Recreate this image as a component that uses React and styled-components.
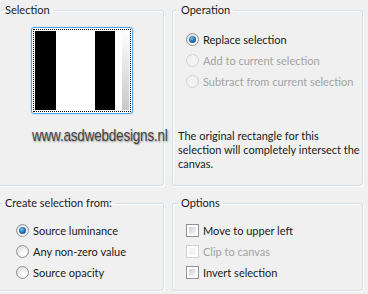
import styled, { createGlobalStyle } from "styled-components"

const GlobalStyle = createGlobalStyle`
    html, body {
        margin: 0;
        padding: 0;
        background: #f0f0f0;
    }
    body {
        font-family: Lato, "Noto Sans", sans-serif;
        font-size: 11px;
        color: #1a1a1a;
        overflow: hidden;
    }
`

export default function App() {
    return (
        <>
            <GlobalStyle />
            <Dialog>
                <Group>
                    <Legend>Selection</Legend>
                    <PreviewArea>
                        <PreviewFrame>
                            <Marquee>
                                <Stripes />
                            </Marquee>
                        </PreviewFrame>
                        <Watermark>www.asdwebdesigns.nl</Watermark>
                    </PreviewArea>
                </Group>

                <Group>
                    <Legend>Operation</Legend>
                    <Options $top={12}>
                        <Choice><Radio $checked /> Replace selection</Choice>
                        <Choice $disabled><Radio $disabled /> Add to current selection</Choice>
                        <Choice $disabled><Radio $disabled /> Subtract from current selection</Choice>
                    </Options>
                    <Note>
                        The original rectangle for this selection will completely intersect the canvas.
                    </Note>
                </Group>

                <Group>
                    <Legend>Create selection from:</Legend>
                    <Options $top={10} $left={19}>
                        <Choice><Radio $checked /> Source luminance</Choice>
                        <Choice><Radio /> Any non-zero value</Choice>
                        <Choice><Radio /> Source opacity</Choice>
                    </Options>
                </Group>

                <Group>
                    <Legend>Options</Legend>
                    <Options $top={10}>
                        <Choice><Check /> Move to upper left</Choice>
                        <Choice $disabled><Check $disabled /> Clip to canvas</Choice>
                        <Choice><Check /> Invert selection</Choice>
                    </Options>
                </Group>
            </Dialog>
        </>
    )
}

const Dialog = styled.div`
    width: 372px;
    height: 294px;
    margin-left: -4px;
    padding-top: 3px;
    box-sizing: border-box;
    display: grid;
    grid-template-columns: 168px 191px;
    grid-template-rows: 183px 95px;
    column-gap: 8px;
    row-gap: 10px;
`

const Group = styled.fieldset`
    margin: 0;
    padding: 0;
    min-width: 0;
    border: 1px solid #d5dfe5;
    border-radius: 3px;
    box-shadow: inset 1px 1px 0 #ffffff, 1px 1px 0 #ffffff;
    display: flex;
    flex-direction: column;
`

const Legend = styled.legend`
    margin-left: 6px;
    padding: 0 3px 0 2px;
    line-height: 14px;
    color: #1a1a1a;
`

const PreviewArea = styled.div`
    display: flex;
    flex-direction: column;
    align-items: center;
    padding: 10px 0 0 4px;
`

const PreviewFrame = styled.div`
    width: 98px;
    height: 83px;
    border: 1px solid #5aa3dc;
    border-radius: 3px;
    box-shadow: 0 0 0 1px #cfe6f8;
    background: #ffffff;
    padding: 1px;
    box-sizing: content-box;
`

const Marquee = styled.div`
    width: 100%;
    height: 100%;
    box-sizing: border-box;
    border: 1px dotted #000000;
    padding: 1px;
`

const Stripes = styled.div`
    width: 100%;
    height: 100%;
    background:
        linear-gradient(to bottom, #ffffff, #e8e8e8 40%, #c8c8c8) right / 7px 100% no-repeat,
        linear-gradient(to right,
            #000 0, #000 21px,
            #fff 21px, #fff 60px,
            #000 60px, #000 80px,
            #fff 80px);
`

const Watermark = styled.div`
    align-self: flex-start;
    margin: 12px 0 0 31px;
    font-family: "Liberation Sans", Arial, sans-serif;
    font-size: 17px;
    letter-spacing: -0.2px;
    color: #444444;
    text-shadow: 1px 1px 2px rgba(0, 0, 0, 0.4);
    transform: scaleX(0.79);
    transform-origin: left center;
    white-space: nowrap;
`

const Options = styled.div`
    display: flex;
    flex-direction: column;
    padding: ${p => p.$top}px 0 0 ${p => p.$left ?? 13}px;
`

const Choice = styled.label`
    height: 21px;
    display: flex;
    align-items: center;
    gap: 4px;
    color: ${p => (p.$disabled ? "#a3a3a3" : "#1a1a1a")};
    white-space: nowrap;
`

const Radio = styled.span`
    width: 11px;
    height: 11px;
    border-radius: 50%;
    flex: none;
    border: 1px solid ${p => (p.$disabled ? "#d2d2d2" : "#8f9194")};
    background: ${p =>
        p.$disabled
            ? "#f2f2f2"
            : "radial-gradient(circle at 65% 70%, #ffffff 0, #f4f4f4 35%, #d6d7d9 100%)"};
    position: relative;

    &::after {
        content: "";
        display: ${p => (p.$checked ? "block" : "none")};
        position: absolute;
        left: 2px;
        top: 2px;
        width: 7px;
        height: 7px;
        border-radius: 50%;
        background: radial-gradient(circle at 40% 35%, #7fc0ee 0, #2a78b8 45%, #0b3f6e 100%);
    }
`

const Check = styled.span`
    width: 11px;
    height: 11px;
    flex: none;
    border: 1px solid ${p => (p.$disabled ? "#d2d2d2" : "#8f9194")};
    background: #ffffff;
    box-sizing: content-box;
    position: relative;

    &::after {
        content: "";
        position: absolute;
        inset: 2px;
        background: ${p =>
            p.$disabled
                ? "#f4f4f4"
                : "linear-gradient(135deg, #c6cacf 0, #e6e7e9 60%, #f7f7f7 100%)"};
    }
`

const Note = styled.p`
    margin: 37px 0 0 5px;
    line-height: 14px;
    color: #1a1a1a;
`
